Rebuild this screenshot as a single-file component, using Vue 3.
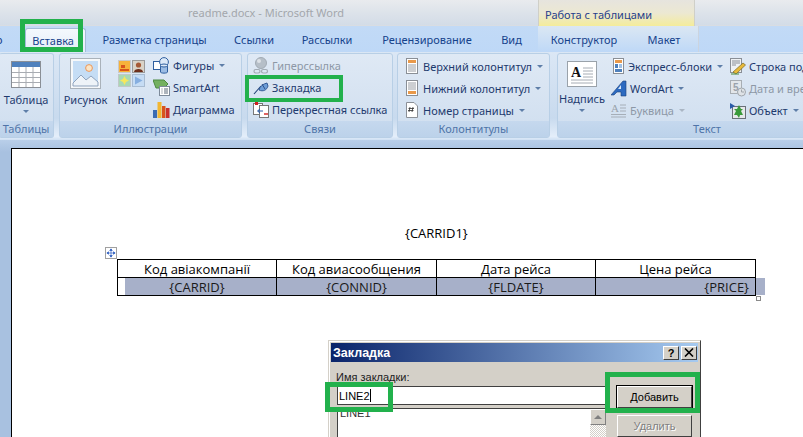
<script setup>
const tabs = [
  { t: 'о', w: 25, cls: 'clip' },
  { t: 'Вставка', w: 61, cls: 'active' },
  { t: 'Разметка страницы', w: 137 },
  { t: 'Ссылки', w: 62 },
  { t: 'Рассылки', w: 84 },
  { t: 'Рецензирование', w: 116 },
  { t: 'Вид', w: 53 },
  { t: 'Конструктор', w: 92, cls: 'ctx' },
  { t: 'Макет', w: 68, cls: 'ctx' }
]
const headers = [
  { t: 'Код авіакомпанії' },
  { t: 'Код авиасообщения' },
  { t: 'Дата рейса' },
  { t: 'Цена рейса' }
]
</script>

<template>
  <div class="app">
    <div class="titlebar">
      <div class="doc-title">readme.docx - Microsoft Word</div>
      <div class="ctx-title">Работа с таблицами</div>
    </div>

    <div class="tabs">
      <div
        v-for="tab in tabs"
        :key="tab.t"
        class="tab"
        :class="tab.cls"
        :style="{ width: tab.w + 'px' }"
      >{{ tab.t }}</div>
      <div class="hl hl-tab"></div>
    </div>

    <div class="ribbon">
      <section class="group g-table">
        <div class="gbody col-center">
          <svg class="big" width="30" height="27" viewBox="0 0 30 27">
            <rect x="0.5" y="0.5" width="29" height="26" fill="#fff" stroke="#8a8f96"/>
            <rect x="1" y="1" width="28" height="5" fill="#4f81bd"/>
            <path d="M1 11.5H29M1 16.5H29M1 21.5H29M8 6V26M15 6V26M22 6V26" stroke="#a8acb2"/>
          </svg>
          <div class="big-label">Таблица</div>
          <i class="caret"></i>
        </div>
        <div class="glabel">Таблицы</div>
      </section>

      <section class="group g-ill">
        <div class="gbody ill">
          <div class="col-center pic">
            <svg width="31" height="31" viewBox="0 0 31 31">
              <rect x="0.5" y="0.5" width="30" height="30" fill="#f6f8fa" stroke="#aab2ba"/>
              <rect x="3" y="3" width="25" height="25" fill="#c5ddf5"/>
              <circle cx="19" cy="10" r="3.4" fill="#fbe4c4" stroke="#e9965a"/>
              <path d="M3 25L11 17L16 22L21 18L28 24V28H3Z" fill="#eef3f8" stroke="#8fa3bd"/>
            </svg>
            <div class="big-label">Рисунок</div>
          </div>
          <div class="col-center clip-btn">
            <svg width="27" height="27" viewBox="0 0 27 27">
              <rect x="0.5" y="0.5" width="12" height="12" fill="#f7b23b" stroke="#c9c9c9"/>
              <path d="M2 9H11V11H2ZM3 5H7V8H3Z" fill="#d8541c"/>
              <rect x="14.5" y="0.5" width="12" height="12" fill="#d9d3c8" stroke="#9a9a9a"/>
              <circle cx="20.5" cy="5" r="2.6" fill="#a65a36"/>
              <path d="M16 12C16 8 25 8 25 12Z" fill="#6e2f1b"/>
              <rect x="0.5" y="14.5" width="12" height="12" fill="#a9d8b4" stroke="#c0c8c8"/>
              <path d="M6.5 16L8 19L11 20.5L8 22L6.5 25L5 22L2 20.5L5 19Z" fill="#f6e85c"/>
              <rect x="14.5" y="14.5" width="12" height="12" fill="#c6dcf4" stroke="#a9bcd2"/>
              <path d="M17 16.5V24.5L24.5 20.5Z" fill="#86aee0"/>
            </svg>
            <div class="big-label">Клип</div>
          </div>
          <div class="rows">
            <div class="row">
              <svg class="ico" width="17" height="17" viewBox="0 0 17 17">
                <rect x="0.5" y="4.5" width="8" height="8" fill="#fff" stroke="#2f5f9f"/>
                <circle cx="11" cy="5" r="4.4" fill="#dce9f8" stroke="#2f5f9f"/>
                <path d="M7.5 8.5V15C7.5 16.5 14.5 16.5 14.5 15V8.5" fill="#9bbce4" stroke="#2f5f9f"/>
                <ellipse cx="11" cy="8.5" rx="3.5" ry="1.5" fill="#dce9f8" stroke="#2f5f9f"/>
              </svg>
              <span>Фигуры</span><i class="caret inline"></i>
            </div>
            <div class="row">
              <svg class="ico" width="17" height="17" viewBox="0 0 17 17">
                <path d="M0 1H11L15 5L11 9H3Z" fill="#74b060" stroke="#4d8a42"/>
                <rect x="6.5" y="7.5" width="10" height="9" fill="#fff" stroke="#7d8a9a"/>
                <path d="M8.5 10H9.5M11 10H15M8.5 12H9.5M11 12H15M8.5 14H9.5M11 14H15" stroke="#5d6a7a"/>
              </svg>
              <span>SmartArt</span>
            </div>
            <div class="row">
              <svg class="ico" width="17" height="17" viewBox="0 0 17 17">
                <rect x="0" y="9" width="4" height="8" fill="#3b6cb4"/>
                <rect x="4.5" y="1" width="4" height="16" fill="#f2b632"/>
                <rect x="9" y="5" width="3.5" height="12" fill="#d8541c"/>
                <rect x="13" y="7" width="3.5" height="10" fill="#c9302c"/>
              </svg>
              <span>Диаграмма</span>
            </div>
          </div>
        </div>
        <div class="glabel">Иллюстрации</div>
      </section>

      <section class="group g-links">
        <div class="gbody rows links">
          <div class="row off">
            <svg class="ico" width="16" height="17" viewBox="0 0 16 17">
              <circle cx="8" cy="6" r="5.5" fill="#b6bfc8" stroke="#a2abb4"/>
              <circle cx="6" cy="4" r="2" fill="#dde2e7"/>
              <rect x="1" y="12.5" width="6" height="3.5" rx="1.7" fill="none" stroke="#a2abb4" stroke-width="1.2"/>
              <rect x="8.5" y="12.5" width="6" height="3.5" rx="1.7" fill="none" stroke="#a2abb4" stroke-width="1.2"/>
            </svg>
            <span>Гиперссылка</span>
          </div>
          <div class="row">
            <svg class="ico" width="16" height="17" viewBox="0 0 16 17">
              <path d="M1 15L8 7" stroke="#1f3f76" stroke-width="1.1"/>
              <path d="M6 11C7 7 10 5 14 4L15 7C14 11 10 13 6 11Z" fill="#6f9fd8" stroke="#28508f" stroke-width="0.9"/>
              <path d="M9 5L12 10" stroke="#1f3f76" stroke-width="0.8"/>
            </svg>
            <span>Закладка</span>
          </div>
          <div class="row">
            <svg class="ico" width="16" height="17" viewBox="0 0 16 17">
              <rect x="0.5" y="2.5" width="9" height="11" fill="#fff" stroke="#777"/>
              <rect x="6.5" y="4.5" width="9" height="12" fill="#fff" stroke="#777"/>
              <rect x="2" y="1" width="3" height="3" fill="#d02020"/>
              <path d="M7 8L4.5 10L7 12M5 10H10" stroke="#2a5ca8" fill="none"/>
              <path d="M11 13H15" stroke="#d02020" stroke-width="1.4"/>
            </svg>
            <span>Перекрестная ссылка</span>
          </div>
          <div class="hl hl-bm"></div>
        </div>
        <div class="glabel">Связи</div>
      </section>

      <section class="group g-hf">
        <div class="gbody rows hf">
          <div class="row">
            <svg class="ico" width="12" height="17" viewBox="0 0 12 17">
              <rect x="0.5" y="0.5" width="11" height="15" fill="#fff" stroke="#8a8f96"/>
              <rect x="2" y="2" width="8" height="3" fill="#e9994a"/>
              <path d="M2 7H10M2 9H10M2 11H10M2 13H10" stroke="#9a9ea4"/>
            </svg>
            <span>Верхний колонтитул</span><i class="caret inline"></i>
          </div>
          <div class="row">
            <svg class="ico" width="12" height="17" viewBox="0 0 12 17">
              <rect x="0.5" y="0.5" width="11" height="15" fill="#fff" stroke="#8a8f96"/>
              <path d="M2 3H10M2 5H10M2 7H10M2 9H10" stroke="#9a9ea4"/>
              <rect x="2" y="11" width="8" height="3" fill="#e9994a"/>
            </svg>
            <span>Нижний колонтитул</span><i class="caret inline"></i>
          </div>
          <div class="row">
            <svg class="ico" width="12" height="17" viewBox="0 0 12 17">
              <path d="M0.5 0.5H8L11.5 4V15.5H0.5Z" fill="#fff" stroke="#8a8f96"/>
              <path d="M4 5L3 10M7 5L6 10M2.5 6.5H8M2 8.5H7.5" stroke="#333" stroke-width="0.8"/>
            </svg>
            <span>Номер страницы</span><i class="caret inline"></i>
          </div>
        </div>
        <div class="glabel">Колонтитулы</div>
      </section>

      <section class="group g-text">
        <div class="gbody txt">
          <div class="col-center nadp">
            <svg width="30" height="26" viewBox="0 0 30 26">
              <rect x="0.5" y="0.5" width="29" height="25" fill="#fff" stroke="#9aa2aa"/>
              <path d="M16 7H26M16 10H26M16 13H26M16 16H26M4 19H26M4 22H26" stroke="#a6acb4"/>
              <text x="4" y="16" class="svg-a">A</text>
            </svg>
            <div class="big-label">Надпись</div>
            <i class="caret"></i>
          </div>
          <div class="rows c2">
            <div class="row">
              <svg class="ico" width="14" height="17" viewBox="0 0 14 17">
                <rect x="2.5" y="0.5" width="10" height="15" fill="#fff" stroke="#8a8f96"/>
                <rect x="4" y="2" width="7" height="3" fill="#e9994a"/>
                <rect x="4" y="6" width="3" height="4" fill="#4f81bd"/>
                <rect x="8" y="6" width="3" height="4" fill="#9fc0e4"/>
                <rect x="4" y="11" width="7" height="3" fill="#4f81bd"/>
              </svg>
              <span>Экспресс-блоки</span><i class="caret inline"></i>
            </div>
            <div class="row">
              <svg class="ico" width="16" height="17" viewBox="0 0 16 17">
                <path d="M0 15L12 1H15V16H10V12H6L3 15Z" fill="#2c6ac0" stroke="#1d3f7a" stroke-width="0.6"/>
                <path d="M10 5V9H7Z" fill="#d8e8f8"/>
              </svg>
              <span>WordArt</span><i class="caret inline"></i>
            </div>
            <div class="row off">
              <svg class="ico" width="16" height="17" viewBox="0 0 16 17">
                <text x="0" y="10" class="svg-ad">A</text>
                <path d="M9 3H15M9 6H15M9 9H15M0 12.5H15M0 15H15" stroke="#a6aeb8"/>
              </svg>
              <span>Буквица</span><i class="caret inline off-c"></i>
            </div>
          </div>
          <div class="rows c3">
            <div class="row">
              <svg class="ico" width="16" height="17" viewBox="0 0 16 17">
                <rect x="0.5" y="0.5" width="11" height="14" fill="#eef1f4" stroke="#8a8f96"/>
                <path d="M2 3H10M2 5H10M2 7H6" stroke="#8a8f96"/>
                <path d="M3 14L13 5L15.5 7L6 16Z" fill="#e8b93a" stroke="#7a6a20" stroke-width="0.7"/>
                <path d="M1 16H9" stroke="#4a8a3a"/>
              </svg>
              <span>Строка подписи</span>
            </div>
            <div class="row off">
              <svg class="ico" width="16" height="17" viewBox="0 0 16 17">
                <rect x="0.5" y="0.5" width="11" height="13" fill="#e2e6ea" stroke="#a8aeb4"/>
                <text x="3" y="11" class="svg-5">5</text>
                <circle cx="11.5" cy="12" r="4" fill="#dfe3e7" stroke="#a0a6ac"/>
                <path d="M11.5 9.5V12H14" stroke="#a0a6ac" fill="none"/>
              </svg>
              <span>Дата и время</span>
            </div>
            <div class="row">
              <svg class="ico" width="16" height="17" viewBox="0 0 16 17">
                <rect x="2.5" y="4.5" width="13" height="12" fill="#e6e8ea" stroke="#6a7078"/>
                <path d="M0 1L5 4L0 7Z" fill="#2a5ca8"/>
                <path d="M9 3L11 7H13L11 9L13 13H10L9 16L7 13H4L6 9L4 7H7Z" fill="#3a9a3a"/>
              </svg>
              <span>Объект</span><i class="caret inline"></i>
            </div>
          </div>
        </div>
        <div class="glabel">Текст</div>
      </section>
    </div>

    <div class="workspace">
      <div class="page">
        <div class="carrid1">{CARRID1}</div>
        <div class="table-wrap">
          <div class="move-handle">
            <svg width="10" height="10" viewBox="0 0 12 12">
              <path d="M6 1.5V10.5M1.5 6H10.5M6 1L4.5 3H7.5ZM6 11L4.5 9H7.5ZM1 6L3 4.5V7.5ZM11 6L9 4.5V7.5Z" stroke="#2a5cc0" stroke-width="0.8" fill="#2a5cc0"/>
            </svg>
          </div>
          <div class="sel-mark"></div>
          <table class="doc-table">
            <tbody>
              <tr>
                <td v-for="h in headers" :key="h.t">{{ h.t }}</td>
              </tr>
              <tr class="sel">
                <td>{CARRID}</td>
                <td>{CONNID}</td>
                <td>{FLDATE}</td>
                <td class="right">{PRICE}</td>
              </tr>
            </tbody>
          </table>
          <div class="resize-handle"></div>
        </div>
      </div>

      <div class="dialog">
        <div class="dlg-title">
          <span>Закладка</span>
          <div class="dlg-btns">
            <div class="dlg-btn">?</div>
            <div class="dlg-btn">
              <svg width="10" height="9" viewBox="0 0 10 9"><path d="M1 0.5L9 8.5M9 0.5L1 8.5" stroke="#000" stroke-width="1.6"/></svg>
            </div>
          </div>
        </div>
        <div class="dlg-body">
          <div class="dlg-left">
            <div class="dlg-label">Имя закладки:</div>
            <div class="dlg-input"><span class="input-text">LINE2</span><i class="cursor"></i></div>
            <div class="dlg-list">
              <span class="list-item">LINE1</span>
              <div class="scroll">
                <div class="scroll-up"><i></i></div>
              </div>
            </div>
          </div>
          <div class="dlg-right">
            <div class="btn default"><span><u>Д</u>обавить</span></div>
            <div class="btn disabled">Удалить</div>
          </div>
        </div>
        <div class="hl hl-input"></div>
        <div class="hl hl-add"></div>
      </div>
    </div>
  </div>
</template>

<style scoped>
.app {
  position: relative;
  width: 803px;
  height: 437px;
  overflow: hidden;
  display: flex;
  flex-direction: column;
  font-family: "Noto Sans", "Open Sans", sans-serif;
  font-size: 11px;
  color: #15428b;
  background: #fff;
}
.titlebar {
  flex: none;
  height: 26px;
  display: flex;
  background: linear-gradient(#e9ebee 0, #dde3ea 50%, #d3dce7 100%);
  border-bottom: 1px solid #d9dde2;
  box-sizing: border-box;
}
.doc-title {
  flex: none;
  width: 538px;
  box-sizing: border-box;
  padding-left: 188px;
  line-height: 26px;
  color: #a3a7ac;
  font-size: 11px;
}
.ctx-title {
  flex: none;
  width: 157px;
  box-sizing: border-box;
  padding-left: 6px;
  line-height: 30px;
  height: 26px;
  color: #27408b;
  border-left: 1px solid #cfcfc8;
  border-right: 1px solid #cfcfc8;
  background: linear-gradient(#e6e4de 0, #ece8d2 50%, #f4ec9a 100%);
}
.tabs {
  position: relative;
  flex: none;
  height: 26px;
  display: flex;
  background: linear-gradient(#c2daf6, #bed8f7);
  box-sizing: border-box;
}
.tab {
  flex: none;
  text-align: center;
  line-height: 28px;
  height: 26px;
  white-space: nowrap;
}
.tab.clip {
  text-align: left;
  text-indent: -4px;
}
.tab.active {
  margin-top: 2px;
  height: 24px;
  line-height: 24px;
  box-sizing: border-box;
  padding-right: 5px;
  border: 1px solid #a3bbd8;
  border-bottom: 0;
  border-radius: 3px 3px 0 0;
  background: linear-gradient(#f4f8fd, #e4edf8);
}
.tab.ctx {
  background: linear-gradient(#dbe7f3, #bed8f7);
}
.tab.ctx + .tab.ctx {
  border-right: 1px solid #cbd4df;
}
.ribbon {
  flex: none;
  height: 88px;
  display: flex;
  gap: 5px;
  padding-top: 1px;
  box-sizing: border-box;
  background: linear-gradient(#dbe7f5, #c8daee 75%, #e4eefa 96%, #cfe0f3);
}
.group {
  flex: none;
  height: 85px;
  box-sizing: border-box;
  border: 1px solid #b8cfe6;
  border-radius: 3px;
  display: flex;
  flex-direction: column;
  background: linear-gradient(#dfe9f5, #cfdeef);
}
.g-table { width: 55px; margin-left: -1px; border-left: 0; }
.g-ill { width: 183px; }
.g-links { width: 146px; }
.g-hf { width: 153px; margin-left: -1px; }
.g-text { width: 300px; margin-left: 2px; }
.gbody {
  flex: 1;
  position: relative;
  min-height: 0;
}
.glabel {
  flex: none;
  height: 16px;
  line-height: 15px;
  text-align: center;
  color: #4f74a8;
  background: linear-gradient(#c5d8ee, #bcd2ea);
}
.col-center {
  display: flex;
  flex-direction: column;
  align-items: center;
}
.g-table .col-center {
  padding-top: 7px;
}
.big-label {
  margin-top: 4px;
  line-height: 15px;
  white-space: nowrap;
  color: #1e3a6e;
}
.caret {
  display: block;
  width: 0;
  height: 0;
  margin-top: 3px;
  border-left: 3px solid transparent;
  border-right: 3px solid transparent;
  border-top: 3px solid #5e7ea8;
}
.caret.inline {
  margin: 0 0 0 5px;
  flex: none;
}
.caret.off-c { border-top-color: #aab6c4; }
.ill {
  display: flex;
  padding-top: 3px;
}
.pic { margin-left: 3px; width: 45px; padding-top: 1px; }
.pic .big-label { margin-top: 3px; }
.clip-btn { margin-left: 9px; width: 28px; padding-top: 3px; }
.clip-btn .big-label { margin-top: 5px; }
.rows {
  display: flex;
  flex-direction: column;
}
.row {
  height: 22px;
  display: flex;
  align-items: center;
  white-space: nowrap;
  color: #1e3a6e;
}
.row.off { color: #8d98a6; }
.ico { flex: none; margin-right: 3px; }
.ill .rows { margin-left: 8px; margin-top: -3px; }
.links { padding: 0 0 0 5px; }
.hf { padding: 2px 0 0 8px; }
.hf .ico { margin-right: 5px; }
.txt { display: flex; }
.nadp { width: 46px; margin-left: 1px; padding-top: 7px; }
.rows.c2 { margin-left: 6px; padding-top: 1px; width: 119px; }
.rows.c3 { padding-top: 1px; }

.hl {
  position: absolute;
  box-sizing: border-box;
  border: 5px solid #22b14c;
  pointer-events: none;
}
.hl-tab { left: 20px; top: -7px; width: 63px; height: 33px; }
.hl-bm { left: -3px; top: 21px; width: 98px; height: 27px; border-width: 4px; }

.workspace {
  flex: 1;
  position: relative;
  background: linear-gradient(#b9cfe9, #a8c1e0 12px);
  padding: 8px 0 0 11px;
  min-height: 0;
  overflow: hidden;
}
.page {
  height: 300px;
  margin-right: -4px;
  box-sizing: border-box;
  background: #fff;
  border: 1px solid #000;
  border-bottom: 0;
  border-right: 0;
  display: flex;
  flex-direction: column;
  font-family: "Open Sans", "Noto Sans", sans-serif;
  font-size: 13px;
  color: #000;
}
.carrid1 {
  margin-top: 75px;
  margin-left: 393px;
  line-height: 18px;
  white-space: nowrap;
}
.table-wrap {
  position: relative;
  margin: 17px 0 0 105px;
  width: 640px;
}
.doc-table {
  border-collapse: collapse;
  table-layout: fixed;
  width: 639px;
}
.doc-table td {
  box-sizing: border-box;
  border: 1px solid #000;
  height: 18px;
  padding: 0 6px;
  line-height: 16px;
  text-align: center;
  white-space: nowrap;
}
.doc-table td:nth-child(odd) { width: 159px; }
.doc-table td:nth-child(even) { width: 160px; }
.doc-table .sel td {
  background: #a7b0c9;
  color: #1a1a1a;
}
.doc-table td.right { text-align: right; }
.sel-mark {
  position: absolute;
  left: 1px;
  top: 19px;
  width: 7px;
  height: 17px;
  background: #fff;
  z-index: 1;
}
.sel-mark::after {
  content: "";
  position: absolute;
  left: 638px;
  top: 0;
  width: 9px;
  height: 17px;
  background: #a7b0c9;
}
.move-handle {
  position: absolute;
  left: -12px;
  top: -12px;
  width: 12px;
  height: 12px;
  box-sizing: border-box;
  background: #fff;
  border: 1px solid #a0a0a0;
  display: flex;
  align-items: center;
  justify-content: center;
}
.move-handle svg { flex: none; }
.resize-handle {
  position: absolute;
  left: 639px;
  top: 37px;
  width: 5px;
  height: 5px;
  box-sizing: border-box;
  background: #fff;
  border: 1px solid #8a8a8a;
}

.dialog {
  position: absolute;
  left: 328px;
  top: 200px;
  width: 373px;
  height: 120px;
  box-sizing: border-box;
  background: #d4d0c8;
  border: 1px solid #d4d0c8;
  border-right-color: #404040;
  box-shadow: inset 1px 1px 0 #fff;
  padding: 2px 2px 0;
  font-family: "Liberation Sans", sans-serif;
  color: #000;
}
.dlg-title {
  height: 19px;
  display: flex;
  align-items: center;
  justify-content: space-between;
  padding: 0 1px 0 2px;
  color: #fff;
  font-weight: 700;
  font-size: 12.5px;
  background: linear-gradient(90deg, #0a246a, #a6caf0);
}
.dlg-btns { display: flex; gap: 2px; }
.dlg-btn {
  width: 16px;
  height: 14px;
  box-sizing: border-box;
  background: #d4d0c8;
  border: 1px solid #404040;
  border-top-color: #fff;
  border-left-color: #fff;
  color: #000;
  font-size: 11px;
  line-height: 12px;
  text-align: center;
  display: flex;
  align-items: center;
  justify-content: center;
}
.dlg-body {
  display: flex;
  padding-left: 5px;
  font-size: 11px;
}
.dlg-left { width: 270px; flex: none; }
.dlg-label { height: 24px; line-height: 31px; color: #222; }
.dlg-input {
  height: 19px;
  box-sizing: border-box;
  margin-left: 1px;
  background: #fff;
  border: 1px solid #404040;
  border-right: 0;
  display: flex;
  align-items: center;
  padding-left: 1px;
}
.cursor { width: 1px; height: 13px; background: #000; }
.dlg-list {
  margin: 3px 0 0 1px;
  height: 60px;
  box-sizing: border-box;
  background: #fff;
  border: 1px solid #404040;
  border-right: 0;
  display: flex;
  justify-content: space-between;
  padding-left: 2px;
  line-height: 9px;
}
.list-item { color: #333; }
.scroll {
  width: 16px;
  background-image: repeating-conic-gradient(#d4d0c8 0 25%, #fff 0 50%);
  background-size: 2px 2px;
}
.scroll-up {
  height: 16px;
  box-sizing: border-box;
  background: #d4d0c8;
  border: 1px solid #808080;
  border-top-color: #fff;
  border-left-color: #fff;
  display: flex;
  align-items: center;
  justify-content: center;
}
.scroll-up i {
  width: 0;
  height: 0;
  border-left: 4px solid transparent;
  border-right: 4px solid transparent;
  border-bottom: 4px solid #808080;
}
.dlg-right {
  margin-left: 11px;
  width: 75px;
  padding-top: 24px;
  display: flex;
  flex-direction: column;
  gap: 7px;
}
.btn {
  height: 22px;
  box-sizing: border-box;
  border: 1px solid #404040;
  border-top-color: #fff;
  border-left-color: #fff;
  background: #d4d0c8;
  display: flex;
  align-items: center;
  justify-content: center;
}
.btn.default {
  outline: 1px solid #000;
  outline-offset: 0;
}
.btn.disabled {
  color: #808080;
  text-shadow: 1px 1px 0 #fff;
}
.hl-input { left: -4px; top: 41px; width: 68px; height: 30px; }
.hl-add { left: 276px; top: 31px; width: 95px; height: 41px; }
.svg-a { font: 700 14px "Liberation Serif", serif; fill: #111; }
.svg-ad { font: 400 11px "Liberation Serif", serif; fill: #9aa2ac; }
.svg-5 { font: 700 10px "Liberation Sans", sans-serif; fill: #9aa2ac; }
</style>
